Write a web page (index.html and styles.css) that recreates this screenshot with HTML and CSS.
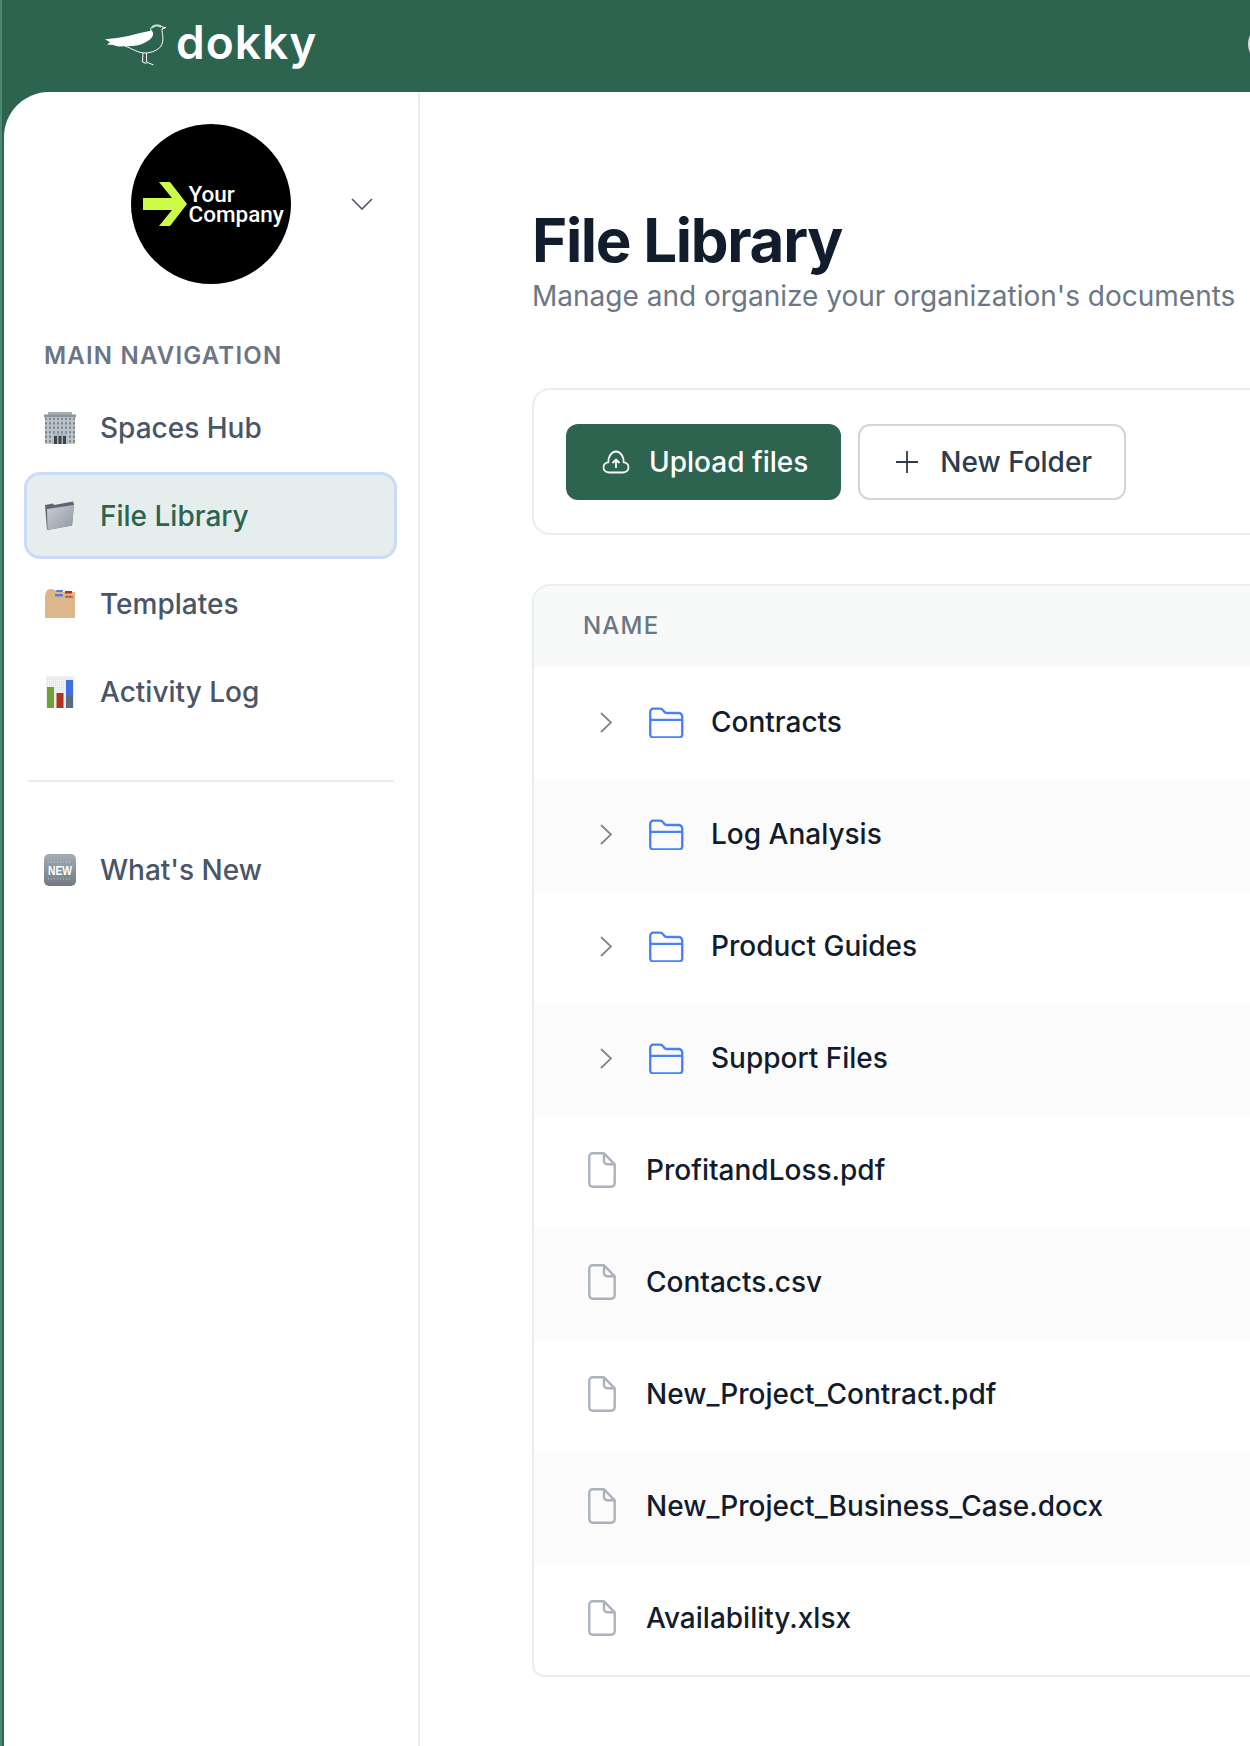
FILE: index.html
```html
<!DOCTYPE html>
<html lang="en">
<head>
    <meta charset="UTF-8">
    <meta name="viewport" content="width=device-width, initial-scale=1.0">
    <title>File Library</title>
    <link rel="stylesheet" href="styles.css">
</head>
<body>

<svg class="svg-defs" width="0" height="0">
    <defs>
        <symbol id="chevron-right" viewBox="0 0 12 21">
            <path d="M1 1l10 9.5L1 20" fill="none" stroke="currentColor" stroke-width="1.8"/>
        </symbol>
        <symbol id="folder" viewBox="0 0 34 30">
            <path d="M1.2 13V4.500a3 3 0 0 1 3-3h6.500a3 3 0 0 1 2.200.9l2.400 2.500a3 3 0 0 0 2.200.9h11.300a3.500 3.500 0 0 1 3.500 3.500v17.300a3 3 0 0 1-3 3H4.200a3 3 0 0 1-3-3V13zM1.200 12.500h31.600" fill="none" stroke="currentColor" stroke-width="2.300" stroke-linejoin="round"/>
        </symbol>
        <symbol id="file" viewBox="0 0 28 36">
            <path d="M4.500 1.300h11.500l10.700 11v19.200a3.200 3.200 0 0 1-3.200 3.200H4.500a3.200 3.200 0 0 1-3.200-3.200V4.500a3.200 3.200 0 0 1 3.200-3.200zM16 1.300v7.700a3.300 3.300 0 0 0 3.300 3.300h7.400" fill="none" stroke="currentColor" stroke-width="2.400" stroke-linejoin="round"/>
        </symbol>
        <pattern id="windows" width="4" height="4.500" patternUnits="userSpaceOnUse">
            <rect width="4" height="4.500" fill="#bcc4c8"/>
            <rect x="1" y="1" width="2" height="2.500" fill="#7b868e"/>
        </pattern>
        <pattern id="dither" width="2" height="2" patternUnits="userSpaceOnUse">
            <rect width="2" height="2" fill="#e6eaed"/>
            <rect width="1" height="1" fill="#f6f8f9"/>
        </pattern>
        <linearGradient id="folder-front" x1="0" y1="0" x2="1" y2="1">
            <stop offset="0" stop-color="#c9ced3"/>
            <stop offset="1" stop-color="#8f98a2"/>
        </linearGradient>
        <linearGradient id="new-badge" x1="0" y1="0" x2="0" y2="1">
            <stop offset="0" stop-color="#a5adb6"/>
            <stop offset="1" stop-color="#707a85"/>
        </linearGradient>
    </defs>
</svg>

<header class="topbar">
    <a class="brand" href="#">
        <svg class="brand-bird" viewBox="0 0 62 44">
            <path d="M0 17.300l12-1.300q13-2 23-5l12-2.500q3 5-2 9-8 6-18 6.500l-14 .500-5-1.500-6-.500 3-2.200z" fill="#fff"/>
            <path d="M46 9c-1-4 2-6 6-6 3 0 5 1 5 2l4 .5-4 1.500c0 5 2 9 0 15-2 6-11 9-17 9-7 0-12-4-20-7M38 31l-.5 9M41.500 31v9l7 3M37.500 40l4 1.500" fill="none" stroke="#fff" stroke-width="1"/>
            <path d="M47 6q4-4 9-1" fill="none" stroke="#cfd8d4" stroke-width="1.500"/>
        </svg>
        <span class="brand-name">dokky</span>
    </a>
    <span class="avatar"></span>
</header>

<div class="shell">
    <aside class="sidebar">
        <div class="company">
            <div class="company-logo">
                <svg class="company-arrow" viewBox="0 0 44 44">
                    <path d="M16 0h11l17 22-17 22H16l13-16H0V16h29z" fill="#cdfb47"/>
                </svg>
                <div class="company-name">Your<br>Company</div>
            </div>
            <svg class="company-toggle" viewBox="0 0 22 12">
                <path d="M1 1l10 10L21 1" fill="none" stroke="#4a5565" stroke-width="1.600"/>
            </svg>
        </div>

        <div class="nav-label">MAIN NAVIGATION</div>
        <nav class="nav">
            <a class="nav-item" href="#">
                <svg class="nav-icon" viewBox="0 0 32 32">
                    <rect x="4" y="0" width="24" height="4" fill="#a4adb2"/>
                    <rect x="0" y="2.500" width="32" height="3" fill="#8a959c"/>
                    <rect x="1" y="5.500" width="30" height="26.500" fill="url(#windows)"/>
                    <rect x="9" y="22" width="14" height="10" fill="#aab3b8"/>
                    <rect x="10" y="24" width="3" height="8" fill="#3e464d"/>
                    <rect x="14.500" y="24" width="3" height="8" fill="#3e464d"/>
                    <rect x="19" y="24" width="3" height="8" fill="#3e464d"/>
                </svg>
                <span>Spaces Hub</span>
            </a>
            <a class="nav-item active" href="#">
                <svg class="nav-icon" viewBox="0 0 32 32">
                    <path d="M1 5l8-1.500 1 1.500L29 1.500l1 3-2 21L3 30z" fill="#5d6670"/>
                    <path d="M3 9l27-4-2 20.500L3.500 30z" fill="url(#folder-front)"/>
                </svg>
                <span>File Library</span>
            </a>
            <a class="nav-item" href="#">
                <svg class="nav-icon" viewBox="0 0 32 32">
                    <path d="M1 30V8q1-7 5-7 5 0 8 3h17v26z" fill="#dcb78c"/>
                    <rect x="12" y="2" width="7" height="2" rx="1" fill="#4a7fe0"/>
                    <rect x="11" y="6" width="8" height="2.500" rx="1" fill="#4a7fe0"/>
                    <rect x="21" y="3" width="7" height="2.500" fill="#b3301f"/>
                    <path d="M21 9h8M23 7.500v2M26 7.500v2" stroke="#b3301f" stroke-width="1"/>
                </svg>
                <span>Templates</span>
            </a>
            <a class="nav-item" href="#">
                <svg class="nav-icon" viewBox="0 0 32 32">
                    <rect x="2" y="0" width="28" height="32" fill="url(#dither)"/>
                    <rect x="3" y="11" width="7" height="21" fill="#6fa138"/>
                    <rect x="12.500" y="17" width="7" height="15" fill="#b5301f"/>
                    <rect x="22" y="4" width="7" height="16" fill="#3f6fe0"/>
                    <rect x="22" y="20" width="7" height="12" fill="#5f6a80"/>
                </svg>
                <span>Activity Log</span>
            </a>
        </nav>
        <div class="nav-divider"></div>
        <nav class="nav">
            <a class="nav-item" href="#">
                <svg class="nav-icon" viewBox="0 0 32 32">
                    <rect x="0" y="0" width="32" height="32" rx="5" fill="url(#new-badge)"/>
                    <path d="M4 8h24M4 25h24" stroke="#c3c9cf" stroke-width="1" stroke-dasharray="1 2"/>
                    <text class="new-text" x="16" y="21" text-anchor="middle" textLength="24" lengthAdjust="spacingAndGlyphs">NEW</text>
                </svg>
                <span>What's New</span>
            </a>
        </nav>
    </aside>

    <main class="content">
        <h1 class="page-title">File Library</h1>
        <p class="page-sub">Manage and organize your organization's documents</p>

        <section class="toolbar">
            <button class="btn btn-primary" type="button">
                <svg class="btn-icon" viewBox="0 0 28 24">
                    <path d="M7.500 22.500h13c3.500 0 6-2.300 6-5.200 0-2.700-2-4.800-4.800-5 .3-4.800-3-10.800-7.700-10.800-4.700 0-8 6-7.700 10.800-2.800.2-4.800 2.300-4.800 5 0 2.900 2.500 5.200 6 5.200z" fill="none" stroke="currentColor" stroke-width="1.800" stroke-linejoin="round"/>
                    <path d="M14 18V9.500M10.500 13L14 9.500l3.500 3.500" fill="none" stroke="currentColor" stroke-width="1.800"/>
                </svg>
                Upload files
            </button>
            <button class="btn btn-outline" type="button">
                <svg class="btn-icon" viewBox="0 0 22 22">
                    <path d="M11 0v22M0 11h22" fill="none" stroke="currentColor" stroke-width="1.800"/>
                </svg>
                New Folder
            </button>
        </section>

        <section class="file-table">
            <div class="file-head">NAME</div>
            <div class="file-row folder-row">
                <svg class="row-chevron"><use href="#chevron-right"/></svg>
                <svg class="row-folder"><use href="#folder"/></svg>
                <span>Contracts</span>
            </div>
            <div class="file-row folder-row">
                <svg class="row-chevron"><use href="#chevron-right"/></svg>
                <svg class="row-folder"><use href="#folder"/></svg>
                <span>Log Analysis</span>
            </div>
            <div class="file-row folder-row">
                <svg class="row-chevron"><use href="#chevron-right"/></svg>
                <svg class="row-folder"><use href="#folder"/></svg>
                <span>Product Guides</span>
            </div>
            <div class="file-row folder-row">
                <svg class="row-chevron"><use href="#chevron-right"/></svg>
                <svg class="row-folder"><use href="#folder"/></svg>
                <span>Support Files</span>
            </div>
            <div class="file-row">
                <svg class="row-file"><use href="#file"/></svg>
                <span>ProfitandLoss.pdf</span>
            </div>
            <div class="file-row">
                <svg class="row-file"><use href="#file"/></svg>
                <span>Contacts.csv</span>
            </div>
            <div class="file-row">
                <svg class="row-file"><use href="#file"/></svg>
                <span>New_Project_Contract.pdf</span>
            </div>
            <div class="file-row">
                <svg class="row-file"><use href="#file"/></svg>
                <span>New_Project_Business_Case.docx</span>
            </div>
            <div class="file-row">
                <svg class="row-file"><use href="#file"/></svg>
                <span>Availability.xlsx</span>
            </div>
        </section>
    </main>
</div>

</body>
</html>
```

FILE: styles.css
```css
* {
    box-sizing: border-box;
}
html, body {
    height: 100%;
}
body {
    margin: 0;
    height: 1746px;
    overflow: hidden;
    display: flex;
    flex-direction: column;
    font-family: Inter, "Liberation Sans", sans-serif;
    background-color: #2c6450;
    border-left: 2px solid #4f8872;
}
a {
    color: inherit;
    text-decoration: none;
}
.svg-defs {
    position: absolute;
}

/* top bar */
.topbar {
    height: 92px;
    flex: none;
    display: flex;
    align-items: center;
    justify-content: space-between;
    padding: 0 0 4px 103px;
}
.brand {
    display: flex;
    align-items: center;
    gap: 9px;
    color: #fff;
}
.brand-bird {
    width: 62px;
    height: 44px;
}
.brand-name {
    margin-bottom: 5px;
    font-size: 46px;
    line-height: 44px;
    font-weight: 600;
    letter-spacing: 1px;
}
.avatar {
    width: 40px;
    height: 40px;
    flex: none;
    margin-right: -38px;
    border-radius: 50%;
    background-color: #dcdcdc;
}

/* layout */
.shell {
    flex: 1;
    display: flex;
    min-height: 0;
    padding-left: 2px;
}
.sidebar {
    width: 416px;
    flex: none;
    padding: 32px 21px 0 20px;
    background-color: #fff;
    border-right: 2px solid #e4efec;
    border-top-left-radius: 45px;
}
.content {
    flex: 1;
    min-width: 0;
    padding: 112px 0 0 112px;
    background-color: #fff;
}

/* company switcher */
.company {
    display: grid;
    grid-template-columns: 1fr 160px 1fr;
    align-items: center;
}
.company-logo {
    grid-column: 2;
    width: 160px;
    height: 160px;
    display: flex;
    align-items: center;
    padding-left: 12px;
    gap: 2px;
    border-radius: 50%;
    background-color: #000;
    color: #fff;
}
.company-arrow {
    width: 44px;
    height: 44px;
    flex: none;
}
.company-name {
    font-family: Roboto, sans-serif;
    font-size: 22.500px;
    line-height: 20px;
    font-weight: 500;
}
.company-toggle {
    width: 22px;
    height: 12px;
    margin-left: 60px;
}

/* sidebar nav */
.nav-label {
    margin: 56px 0 12px 20px;
    font-size: 24px;
    line-height: 32px;
    font-weight: 600;
    letter-spacing: 1.200px;
    color: #6b7585;
}
.nav {
    display: flex;
    flex-direction: column;
    gap: 1px;
}
.nav-item {
    height: 87px;
    display: flex;
    align-items: center;
    gap: 23px;
    padding-left: 18px;
    border: 3.500px solid transparent;
    border-radius: 16px;
    font-size: 28px;
    font-weight: 500;
    color: #4a5565;
}
.nav-item.active {
    background-color: #e6eeed;
    border-color: #c9dbf7;
    color: #2c6450;
}
.nav-icon {
    width: 32px;
    height: 32px;
    flex: none;
    margin-left: -1px;
    margin-right: 1px;
}
.new-text {
    font-family: "Liberation Sans", sans-serif;
    font-size: 12px;
    font-weight: 700;
    fill: #fff;
}
.nav-divider {
    height: 2px;
    margin: 45px 3px 44px 4px;
    background-color: #e8efee;
}

/* page heading */
.page-title {
    margin: 0;
    font-size: 60px;
    line-height: 72px;
    font-weight: 700;
    letter-spacing: -1.300px;
    color: #111c2d;
}
.page-sub {
    margin: 0;
    font-size: 28px;
    line-height: 40px;
    white-space: nowrap;
    color: #6b7785;
}

/* toolbar */
.toolbar {
    display: flex;
    gap: 17px;
    margin: 72px -40px 0 0;
    padding: 34px 32px 33px;
    border: 2px solid #e8efee;
    border-radius: 18px;
}
.btn {
    height: 76px;
    display: flex;
    align-items: center;
    border-radius: 12px;
    font-family: inherit;
    font-size: 28px;
    font-weight: 500;
}
.btn-primary {
    gap: 19px;
    padding: 0 33px 0 36px;
    background-color: #2c6450;
    border: none;
    color: #fff;
}
.btn-outline {
    gap: 22px;
    padding: 0 32px 0 36px;
    background-color: #fff;
    border: 2px solid #d1d5db;
    color: #2f3a4a;
}
.btn-primary .btn-icon {
    width: 28px;
    height: 24px;
}
.btn-outline .btn-icon {
    width: 22px;
    height: 22px;
}

/* file table */
.file-table {
    margin: 49px -40px 0 0;
    border: 2px solid #e8efee;
    border-right: none;
    border-radius: 18px 0 0 12px;
    overflow: hidden;
}
.file-head {
    height: 81px;
    display: flex;
    align-items: center;
    padding: 0 0 2px 49px;
    background-color: #f8faf9;
    font-size: 24px;
    font-weight: 500;
    letter-spacing: 1.200px;
    color: #6b7585;
}
.file-row {
    height: 112px;
    display: flex;
    align-items: center;
    padding: 0 0 2px 54px;
    font-size: 28px;
    font-weight: 500;
    color: #111c2d;
}
.file-row:nth-child(odd) {
    background-color: #fbfbfb;
}
.folder-row {
    padding-left: 66px;
}
.row-chevron {
    width: 12px;
    height: 21px;
    flex: none;
    color: #7d8793;
}
.row-folder {
    width: 35px;
    height: 31px;
    flex: none;
    margin: 0 27px 0 37px;
    color: #4a80f5;
}
.row-file {
    width: 28px;
    height: 36px;
    flex: none;
    margin-right: 30px;
    color: #aab2bc;
}
```
